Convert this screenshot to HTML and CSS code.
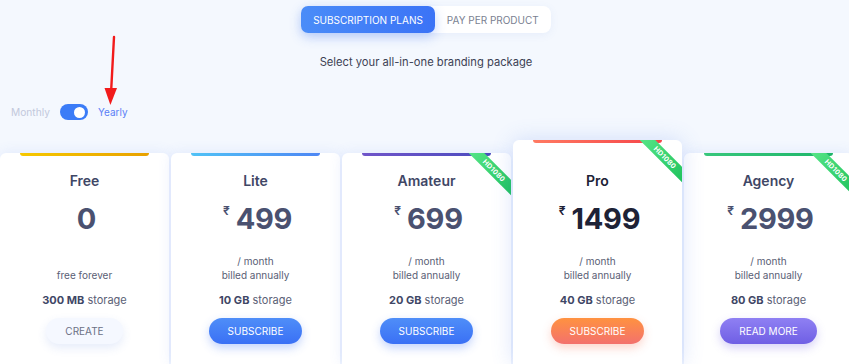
FILE: index.html
```html
<!DOCTYPE html>
<html lang="en">
<head>
<meta charset="utf-8">
<title>Pricing</title>
<link rel="stylesheet" href="styles.css">
</head>
<body>
<div class="page">
  <header class="top">
    <div class="tabs">
      <button class="tab active">SUBSCRIPTION PLANS</button>
      <button class="tab">PAY PER PRODUCT</button>
    </div>
    <p class="tagline">Select your all-in-one branding package</p>
  </header>

  <div class="billing">
    <span class="period">Monthly</span>
    <span class="switch"><span class="knob"></span></span>
    <span class="period on">Yearly</span>
  </div>

  <svg class="arrow" width="30" height="80" viewBox="100 30 30 80">
    <line x1="114" y1="37" x2="111.2" y2="90" stroke="#f21b1b" stroke-width="2.4" stroke-linecap="round"/>
    <polygon points="104.5,88 117,88 110.4,105" fill="#f21b1b"/>
  </svg>

  <section class="plans">
    <article class="card">
      <div class="bar bar-free"></div>
      <h3 class="name">Free</h3>
      <div class="price"><span class="amount">0</span></div>
      <div class="desc"><span>free forever</span></div>
      <p class="storage"><b>300 MB</b> storage</p>
      <button class="btn btn-light">CREATE</button>
    </article>

    <article class="card">
      <div class="bar bar-lite"></div>
      <h3 class="name">Lite</h3>
      <div class="price"><span class="cur">₹</span><span class="amount">499</span></div>
      <div class="desc"><span>/ month</span><span>billed annually</span></div>
      <p class="storage"><b>10 GB</b> storage</p>
      <button class="btn btn-blue">SUBSCRIBE</button>
    </article>

    <article class="card">
      <div class="bar bar-amateur"></div>
      <div class="ribbon">HD1080</div>
      <h3 class="name">Amateur</h3>
      <div class="price"><span class="cur">₹</span><span class="amount">699</span></div>
      <div class="desc"><span>/ month</span><span>billed annually</span></div>
      <p class="storage"><b>20 GB</b> storage</p>
      <button class="btn btn-blue">SUBSCRIBE</button>
    </article>

    <article class="card card-featured">
      <div class="bar bar-pro"></div>
      <div class="ribbon">HD1080</div>
      <h3 class="name">Pro</h3>
      <div class="price"><span class="cur">₹</span><span class="amount">1499</span></div>
      <div class="desc"><span>/ month</span><span>billed annually</span></div>
      <p class="storage"><b>40 GB</b> storage</p>
      <button class="btn btn-orange">SUBSCRIBE</button>
    </article>

    <article class="card">
      <div class="bar bar-agency"></div>
      <div class="ribbon">HD1080</div>
      <h3 class="name">Agency</h3>
      <div class="price"><span class="cur">₹</span><span class="amount">2999</span></div>
      <div class="desc"><span>/ month</span><span>billed annually</span></div>
      <p class="storage"><b>80 GB</b> storage</p>
      <button class="btn btn-purple">READ MORE</button>
    </article>
  </section>
</div>
</body>
</html>
```

FILE: styles.css
```css
* { box-sizing: border-box; margin: 0; padding: 0; }

html, body {
  width: 849px;
  height: 364px;
  overflow: hidden;
}

body {
  background: #f4f8fe;
  font-family: "Inter", "Open Sans", sans-serif;
  color: #3f4766;
}

.page {
  position: relative;
  height: 364px;
  overflow: hidden;
}

.top {
  display: flex;
  flex-direction: column;
  align-items: center;
  padding-top: 6px;
  padding-left: 3px;
}

.tabs {
  display: flex;
  background: #fff;
  border-radius: 8px;
  box-shadow: 0 2px 8px rgba(80, 120, 210, 0.08);
}

.tab {
  height: 27px;
  padding: 0 12px;
  border: 0;
  background: transparent;
  font-family: inherit;
  font-size: 10px;
  color: #7a7f91;
  border-radius: 7px;
}

.tab.active {
  color: #fff;
  background: linear-gradient(90deg, #4a8cf8, #3b73f6);
  box-shadow: 0 4px 12px rgba(59, 115, 246, 0.3);
}

.tagline {
  margin-top: 22px;
  font-size: 11.2px;
  line-height: 14px;
  color: #3d4255;
}

.billing {
  display: flex;
  align-items: center;
  gap: 10px;
  margin-top: 35px;
  padding-left: 11px;
  height: 16px;
}

.period {
  font-size: 10.2px;
  color: #c2c8dc;
}

.period.on { color: #5a7ff6; font-size: 10px; }

.switch {
  display: flex;
  align-items: center;
  justify-content: flex-end;
  width: 28px;
  height: 16px;
  padding: 0 3px;
  border-radius: 8px;
  background: #3b7cf7;
}

.knob {
  width: 11px;
  height: 11px;
  border-radius: 50%;
  background: #fff;
}

.arrow {
  position: absolute;
  left: 100px;
  top: 30px;
}

.plans {
  display: grid;
  grid-template-columns: repeat(5, 169px);
  gap: 2px;
  align-items: start;
  margin-top: 33px;
}

.card {
  position: relative;
  overflow: hidden;
  height: 211px;
  background: #fff;
  border-radius: 6px 6px 0 0;
  text-align: center;
  box-shadow: 0 0 14px rgba(70, 115, 235, 0.12);
  display: flex;
  flex-direction: column;
  align-items: center;
}

.card-featured {
  margin-top: -13px;
  height: 224px;
  z-index: 1;
  box-shadow: 0 0 22px rgba(70, 115, 235, 0.2);
}

.bar {
  align-self: stretch;
  height: 3px;
  margin: 0 20px;
  border-radius: 0 0 3px 3px;
}

.card-featured .bar { margin-bottom: 13px; }

.bar-free { background: linear-gradient(90deg, #f6c800, #e8a100); }
.bar-lite { background: linear-gradient(90deg, #50c2f6, #4d86f4); }
.bar-amateur { background: linear-gradient(90deg, #7055c9, #4b4cbf); }
.bar-pro { background: linear-gradient(90deg, #ff7a62, #f54449); }
.bar-agency { background: linear-gradient(90deg, #38c77c, #1db569); }

.ribbon {
  position: absolute;
  top: 11.5px;
  right: -13px;
  width: 60px;
  height: 11px;
  transform: rotate(45deg);
  background: linear-gradient(90deg, #55e486, #1fc25c);
  color: #fff;
  font-size: 7px;
  line-height: 11px;
  font-weight: 700;
  letter-spacing: 0.2px;
  text-align: center;
}

.name {
  margin-top: 16px;
  font-size: 14px;
  line-height: 18px;
  font-weight: 600;
  color: #3f4766;
}

.card-featured .name { color: #1e2236; }

.price {
  display: flex;
  align-items: flex-start;
  justify-content: center;
  gap: 6px;
  margin-top: 12px;
  padding-left: 4px;
}

.cur {
  margin-top: 2px;
  font-size: 12px;
  line-height: 14px;
  font-weight: 600;
  color: #4a5170;
}

.amount {
  font-size: 29px;
  line-height: 34px;
  font-weight: 700;
  color: #4a5170;
  letter-spacing: -0.3px;
}

.card-featured .amount,
.card-featured .cur { color: #1e2236; }

.desc {
  display: flex;
  flex-direction: column;
  justify-content: flex-end;
  height: 28px;
  margin-top: 18px;
  font-size: 10px;
  line-height: 14px;
  color: #5a6075;
}

.storage {
  margin-top: 11px;
  font-size: 11px;
  line-height: 14px;
  color: #5a6075;
}

.storage b {
  font-weight: 700;
  color: #3f4766;
}

.btn {
  margin-top: 11px;
  height: 26px;
  padding: 0 19px;
  border: 0;
  border-radius: 13px;
  font-family: inherit;
  font-size: 10px;
  color: #fff;
}

.btn-light {
  background: #f5f8ff;
  color: #6b7085;
  box-shadow: 0 4px 10px rgba(80, 120, 220, 0.14);
}

.btn-blue {
  background: linear-gradient(180deg, #4f8ef8, #3a70f5);
  box-shadow: 0 4px 10px rgba(59, 112, 245, 0.3);
}

.btn-orange {
  background: linear-gradient(180deg, #ff9240, #f3716d);
  box-shadow: 0 4px 10px rgba(245, 120, 90, 0.3);
}

.btn-purple {
  background: linear-gradient(180deg, #8f80f3, #6f5fe4);
  box-shadow: 0 4px 10px rgba(111, 95, 228, 0.28);
}
```
